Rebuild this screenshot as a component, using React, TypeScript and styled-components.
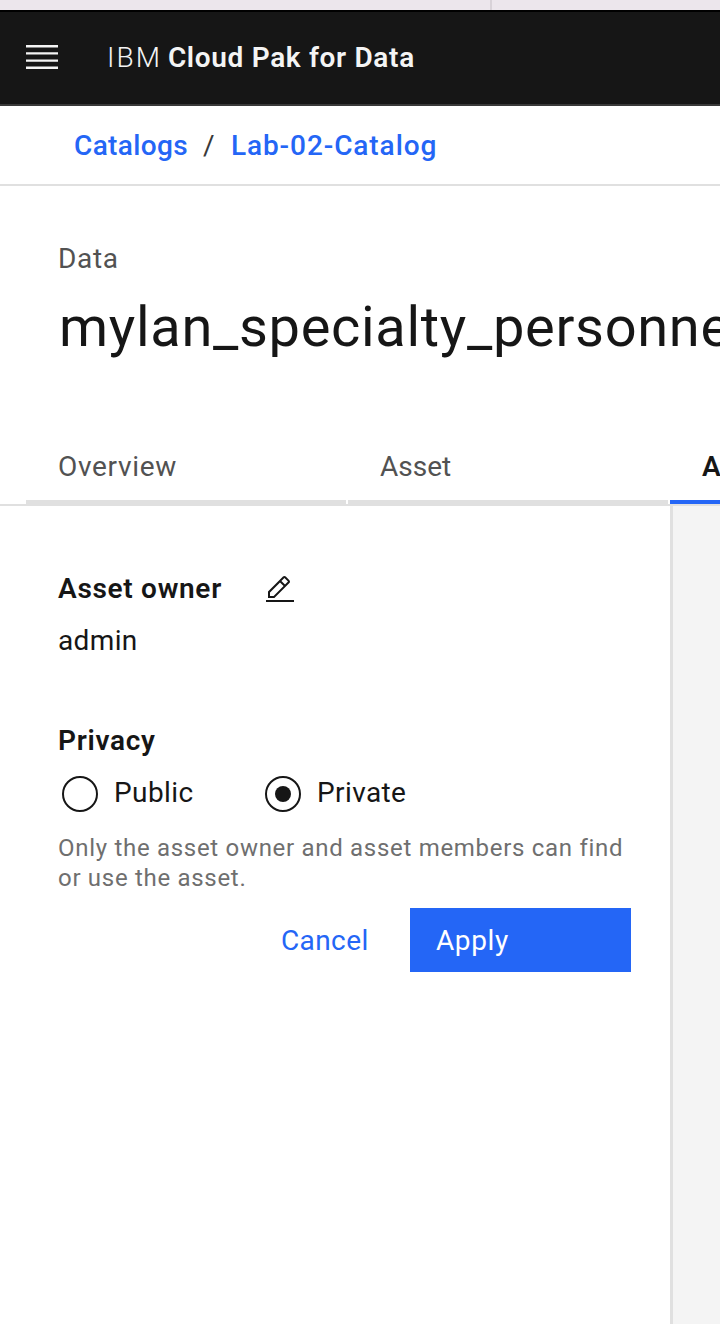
import React from 'react';
import styled, { createGlobalStyle } from 'styled-components';

const GlobalStyle = createGlobalStyle`
  *, *::before, *::after { box-sizing: border-box; }
  body {
    margin: 0;
    background: #fff;
    color: #161616;
    font: 400 28px/36px Roboto, "Liberation Sans", sans-serif;
    overflow: hidden;
  }
  h1, h2, p { margin: 0; }
`;

const Page = styled.div`
  display: flex;
  flex-direction: column;
  width: 720px;
  height: 1324px;
  overflow: hidden;
`;

const BrowserStrip = styled.div`
  display: flex;
  flex: 0 0 10px;
  background: #ece6ec;
`;

const BrowserTab = styled.div`
  width: 492px;
  border-right: 2px solid #d8d2d8;
`;

const Header = styled.header`
  display: flex;
  align-items: center;
  flex: 0 0 96px;
  padding: 0 22px;
  gap: 45px;
  background: #161616;
  border-top: 2px solid #000;
  border-bottom: 2px solid #393939;
  color: #f4f4f4;
`;

const MenuButton = styled.button`
  display: flex;
  padding: 0;
  margin-top: -2px;
  border: 0;
  background: none;
  color: inherit;
`;

const Brand = styled.div`
  display: flex;
  gap: 6px;
  white-space: nowrap;
`;

const BrandPrefix = styled.span`
  font-weight: 300;
  letter-spacing: 2px;
`;

const BrandName = styled.span`
  font-weight: 600;
  letter-spacing: 0.67px;
`;

const Breadcrumb = styled.nav`
  display: flex;
  align-items: center;
  flex: 0 0 80px;
  padding: 2px 0 0 74px;
  border-bottom: 2px solid #e0e0e0;
`;

const Crumb = styled.a<{ $spacing: number }>`
  color: #2466f6;
  font-weight: 500;
  letter-spacing: ${(p) => p.$spacing}px;
`;

const Separator = styled.span`
  width: 43px;
  padding-left: 15px;
  color: #393939;
`;

const TitleBlock = styled.div`
  flex: 0 0 244px;
  padding: 55px 0 0 58px;
  letter-spacing: 0.7px;
  color: #525252;
`;

const Title = styled.h1`
  margin: 18px 0 0 1px;
  color: #161616;
  font-size: 56px;
  font-weight: 400;
  line-height: 64px;
  letter-spacing: 0.68px;
  white-space: nowrap;
`;

const TabBar = styled.div`
  display: flex;
  flex: 0 0 76px;
  gap: 2px;
  padding-left: 26px;
  border-bottom: 2px solid #e0e0e0;
`;

const Tab = styled.button<{ $active?: boolean; $spacing?: number }>`
  flex: 0 0 320px;
  padding: 4px 0 0 32px;
  border: 0;
  border-bottom: 4px solid ${(p) => (p.$active ? '#2466f6' : '#e0e0e0')};
  background: none;
  color: ${(p) => (p.$active ? '#161616' : '#525252')};
  font: inherit;
  font-weight: ${(p) => (p.$active ? 600 : 400)};
  letter-spacing: ${(p) => p.$spacing ?? 0}px;
  text-align: left;
`;

const Body = styled.div`
  display: flex;
  flex: 1;
`;

const Panel = styled.section`
  flex: 0 0 670px;
  padding: 65px 39px 0 58px;
`;

const Side = styled.aside`
  flex: 1;
  margin-top: -2px;
  border-left: 3px solid #e0e0e0;
  border-top: 2px solid #e0e0e0;
  background: #f4f4f4;
`;

const OwnerRow = styled.div`
  display: flex;
  align-items: center;
  gap: 42px;
  height: 36px;
`;

const Label = styled.h2`
  font-size: 28px;
  font-weight: 600;
  letter-spacing: 0.7px;
`;

const PrivacyGroup = styled.div`
  margin-top: 64px;
`;

const Value = styled.p`
  margin-top: 16px;
  letter-spacing: 0.35px;
`;

const RadioGroup = styled.div`
  display: flex;
  padding: 17px 0 0 4px;
`;

const Radio = styled.label`
  display: flex;
  gap: 16px;
  width: 203px;
  letter-spacing: 0.4px;
  line-height: 33px;
`;

const RadioMark = styled.span<{ $checked?: boolean }>`
  display: flex;
  align-items: center;
  justify-content: center;
  width: 36px;
  height: 36px;
  border: 2px solid #161616;
  border-radius: 50%;
  &::after {
    content: '';
    width: 16px;
    height: 16px;
    border-radius: 50%;
    background: ${(p) => (p.$checked ? '#161616' : 'transparent')};
  }
`;

const Hint = styled.p`
  margin-top: 21px;
  color: #6f6f6f;
  font-size: 24px;
  line-height: 30px;
  letter-spacing: 0.7px;
`;

const Actions = styled.div`
  display: flex;
  justify-content: flex-end;
  margin-top: 15px;
`;

const Button = styled.button<{ $primary?: boolean }>`
  width: ${(p) => (p.$primary ? 221 : 155)}px;
  height: 64px;
  padding: 2px 26px 0;
  border: 0;
  background: ${(p) => (p.$primary ? '#2466f6' : 'none')};
  color: ${(p) => (p.$primary ? '#fff' : '#2466f6')};
  font: inherit;
  letter-spacing: ${(p) => (p.$primary ? 0.6 : 0.4)}px;
  text-align: left;
`;

const EditGlyph = styled.svg`
  margin-top: 2px;
`;

const MenuIcon = () => (
  <svg width="40" height="40" viewBox="0 0 20 20" fill="currentColor">
    <path d="M2 14.8h16V16H2zM2 11.2h16v1.2H2zM2 7.6h16v1.2H2zM2 4h16v1.2H2z" />
  </svg>
);

const EditIcon = () => (
  <EditGlyph width="32" height="32" viewBox="0 0 32 32" fill="currentColor">
    <path d="M2 26h28v2H2zM25.4 9c.8-.8.8-2 0-2.8l-3.6-3.6c-.8-.8-2-.8-2.8 0l-15 15V24h6.4l15-15zM20.4 4L24 7.6l-3 3L17.4 7l3-3zM6 22v-3.6l10-10 3.6 3.6-10 10H6z" />
  </EditGlyph>
);

export default function App() {
  return (
    <Page>
      <GlobalStyle />
      <BrowserStrip>
        <BrowserTab />
      </BrowserStrip>
      <Header>
        <MenuButton aria-label="Menu">
          <MenuIcon />
        </MenuButton>
        <Brand>
          <BrandPrefix>IBM</BrandPrefix>
          <BrandName>Cloud Pak for Data</BrandName>
        </Brand>
      </Header>
      <Breadcrumb>
        <Crumb $spacing={0.35}>Catalogs</Crumb>
        <Separator>/</Separator>
        <Crumb $spacing={0.92}>Lab-02-Catalog</Crumb>
      </Breadcrumb>
      <TitleBlock>
        Data
        <Title>mylan_specialty_personnel</Title>
      </TitleBlock>
      <TabBar>
        <Tab $spacing={0.7}>Overview</Tab>
        <Tab>Asset</Tab>
        <Tab $active>Access</Tab>
      </TabBar>
      <Body>
        <Panel>
          <OwnerRow>
            <Label>Asset owner</Label>
            <EditIcon />
          </OwnerRow>
          <Value>admin</Value>
          <PrivacyGroup>
            <Label>Privacy</Label>
            <RadioGroup>
              <Radio>
                <RadioMark />
                Public
              </Radio>
              <Radio>
                <RadioMark $checked />
                Private
              </Radio>
            </RadioGroup>
            <Hint>
              Only the asset owner and asset members can find
              <br />
              or use the asset.
            </Hint>
          </PrivacyGroup>
          <Actions>
            <Button>Cancel</Button>
            <Button $primary>Apply</Button>
          </Actions>
        </Panel>
        <Side />
      </Body>
    </Page>
  );
}
